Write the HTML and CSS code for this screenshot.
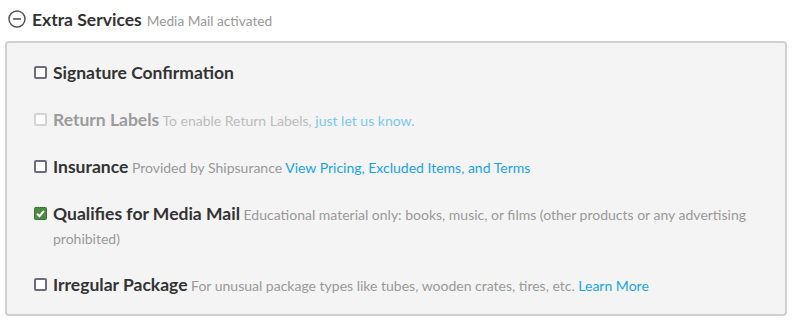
FILE: index.html
```html
<!DOCTYPE html>
<html lang="en">
<head>
    <meta charset="UTF-8">
    <meta name="viewport" content="width=device-width, initial-scale=1.0">
    <title>Extra Services</title>
    <link rel="stylesheet" href="styles.css">
</head>
<body>
    <div class="section-head">
        <svg class="toggle-icon" width="18" height="18" viewBox="0 0 18 18">
            <circle cx="9" cy="9" r="8" fill="none" stroke="#555" stroke-width="1.5"/>
            <line x1="5" y1="9" x2="13" y2="9" stroke="#555" stroke-width="1.6"/>
        </svg>
        <span class="section-title">Extra Services</span>
        <span class="section-note">Media Mail activated</span>
    </div>

    <div class="services-box">
        <div class="service">
            <span class="check"></span>
            <div class="service-text">
                <span class="service-label">Signature Confirmation</span>
            </div>
        </div>
        <div class="service disabled">
            <span class="check"></span>
            <div class="service-text">
                <span class="service-label">Return Labels</span>
                <span class="service-desc">To enable Return Labels, <a href="#">just let us know.</a></span>
            </div>
        </div>
        <div class="service">
            <span class="check"></span>
            <div class="service-text">
                <span class="service-label">Insurance</span>
                <span class="service-desc">Provided by Shipsurance <a href="#">View Pricing, Excluded Items, and Terms</a></span>
            </div>
        </div>
        <div class="service">
            <span class="check checked">
                <svg width="11" height="11" viewBox="0 0 11 11">
                    <path d="M2 5.8 L4.4 8.2 L9 2.8" fill="none" stroke="#fff" stroke-width="2"/>
                </svg>
            </span>
            <div class="service-text">
                <span class="service-label">Qualifies for Media Mail</span>
                <span class="service-desc">Educational material only: books, music, or films (other products or any advertising prohibited)</span>
            </div>
        </div>
        <div class="service">
            <span class="check"></span>
            <div class="service-text">
                <span class="service-label">Irregular Package</span>
                <span class="service-desc">For unusual package types like tubes, wooden crates, tires, etc. <a href="#">Learn More</a></span>
            </div>
        </div>
    </div>
</body>
</html>
```

FILE: styles.css
```css
body {
    margin: 0;
    background-color: #fff;
    font-family: 'Lato', sans-serif;
    color: #333;
}

.section-head {
    display: flex;
    align-items: center;
    height: 38px;
    padding-left: 8px;
}

.toggle-icon {
    margin-right: 6px;
}

.section-title {
    font-size: 17.5px;
    font-weight: 700;
    color: #333;
    margin-right: 5px;
}

.section-note {
    font-size: 13.7px;
    color: #999;
    padding-top: 2px;
}

.services-box {
    margin: 3px 11px 0 5px;
    background-color: #f4f4f4;
    border: 2px solid #cfcfcf;
    border-radius: 4px;
    padding: 19px 20px 16px 27px;
}

.service {
    display: flex;
    align-items: flex-start;
    margin-bottom: 23px;
}

.service:last-child {
    margin-bottom: 0;
}

.check {
    flex: none;
    width: 9px;
    height: 9px;
    margin-top: 4px;
    margin-right: 6px;
    border: 2px solid #6e6c7c;
    border-radius: 2px;
    background-color: #fff;
    display: flex;
    align-items: center;
    justify-content: center;
}

.check.checked {
    width: 11px;
    height: 11px;
    border: 1px dotted #2f5e2a;
    background-color: #4b8b40;
}

.service-text {
    font-size: 14px;
    line-height: 24px;
}

.service-label {
    font-size: 17.5px;
    line-height: 1;
    font-weight: 700;
    color: #333;
}

.service-desc {
    font-size: 14px;
    line-height: 1;
    color: #999;
}

.service-desc a {
    color: #18a4ea;
    text-decoration: none;
}

.disabled .check {
    border-color: #d4d4d4;
}

.disabled .service-label {
    color: #9b9b9b;
}

.disabled .service-desc {
    color: #bcbcbc;
}

.disabled .service-desc a {
    color: #7cc7f0;
}
```
